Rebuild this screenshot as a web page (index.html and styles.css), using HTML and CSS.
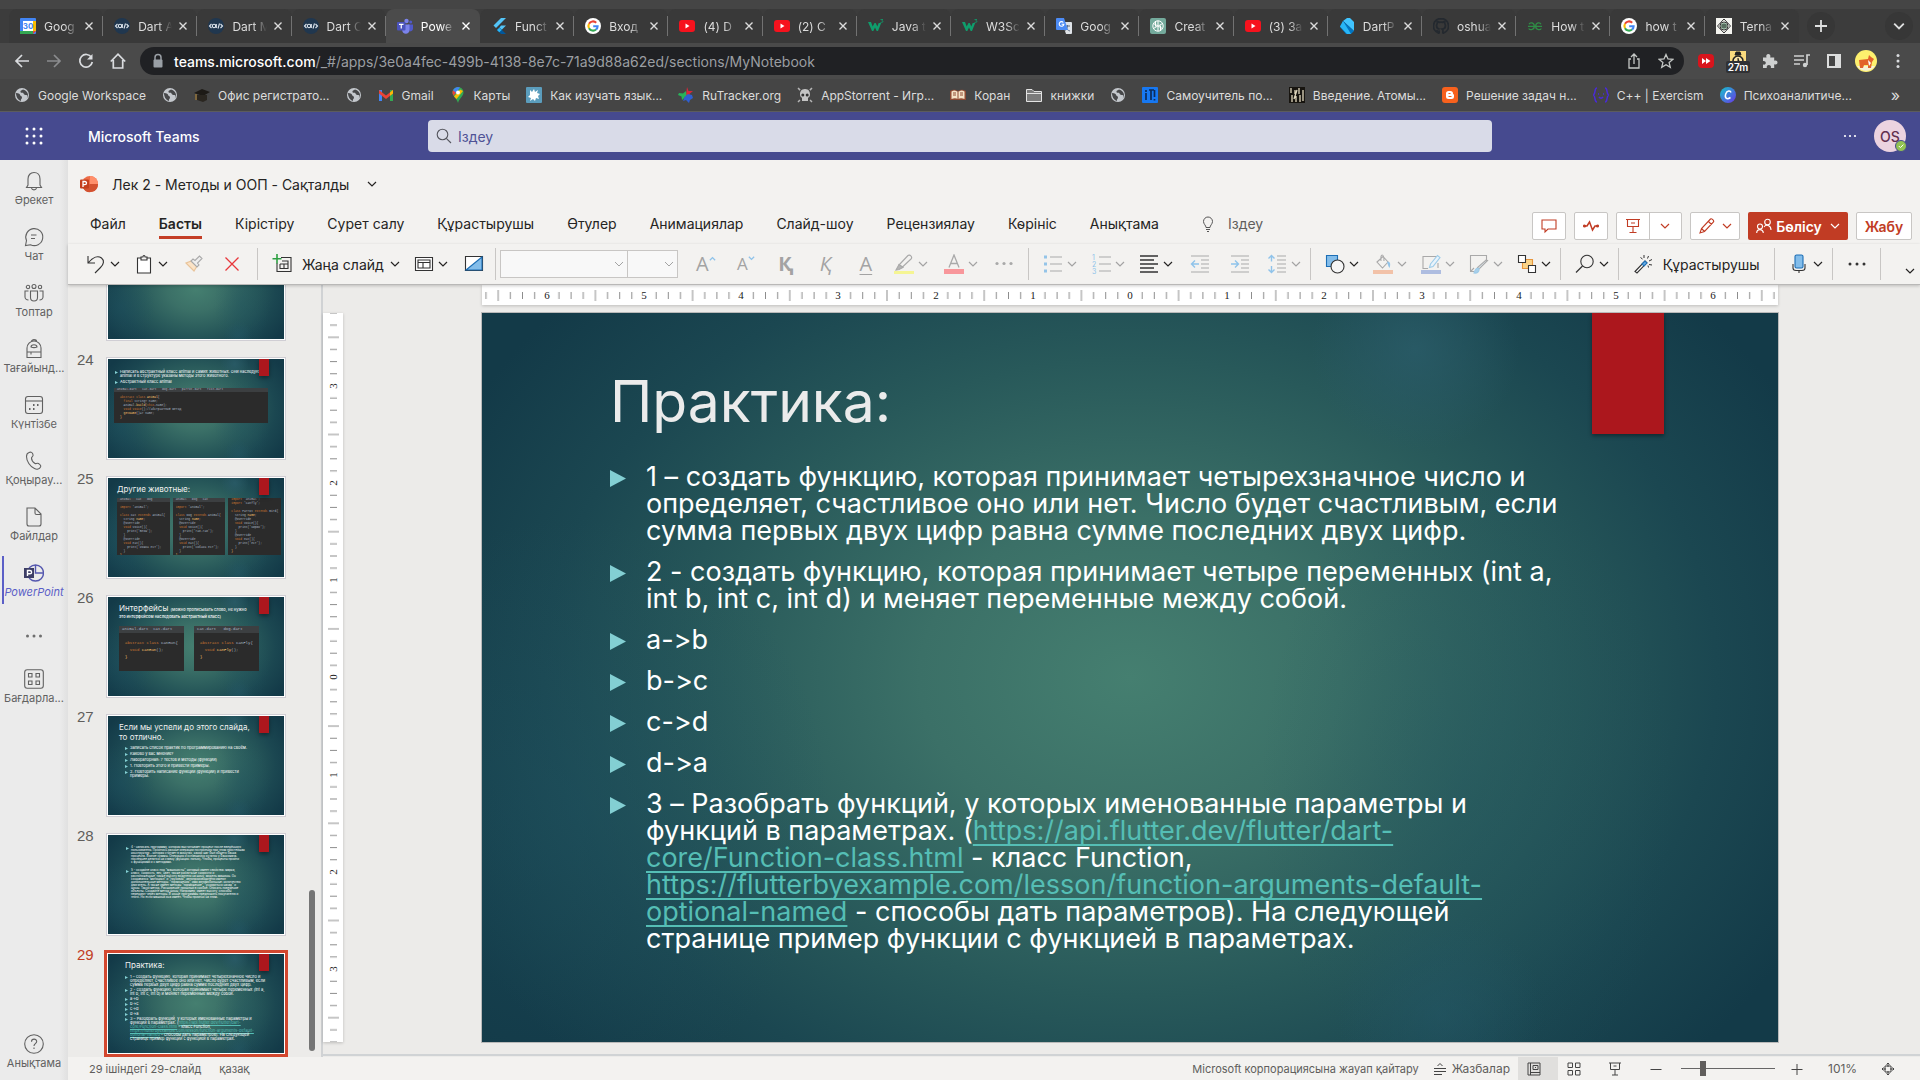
FILE: index.html
```html
<!DOCTYPE html>
<html lang="kk">
<head>
<meta charset="utf-8">
<title>PowerPoint | Microsoft Teams</title>
<link rel="stylesheet" href="styles.css">
</head>
<body>
<svg class="sprite" aria-hidden="true">
  <symbol id="chev" viewBox="0 0 10 10"><path d="M1 3l4 4 4-4" fill="none" stroke="currentColor" stroke-width="1.2"/></symbol>
  <symbol id="x" viewBox="0 0 10 10"><path d="M1.500 1.500l7 7M8.500 1.500l-7 7" stroke="currentColor" stroke-width="1.400"/></symbol>
  <symbol id="globe" viewBox="0 0 16 16"><circle cx="8" cy="8" r="7" fill="#c4c8cd"/><path d="M2 6c3 0 4 1 4 2s2 1 2 2.500S6.500 12 7 14c-3-1-5-4-5-8zM9 2.500c-1 1-3 1-2.500 2.500S9 5 9.500 6.500 11 8 12.500 8s1 3-.5 4c2-1.500 2.500-4 1.500-6S11 3 9 2.500z" fill="#47484a"/></symbol>
  <symbol id="codes" viewBox="0 0 16 16"><circle cx="8" cy="8" r="8" fill="#20374f"/><path d="M3.500 6L1.500 8l2 2M12.500 6l2 2-2 2M11.500 5.500l-1.500 5" fill="none" stroke="#dfe6ee" stroke-width="1.100"/><circle cx="6" cy="8" r="1.700" fill="none" stroke="#dfe6ee" stroke-width="1.100"/><path d="M8.300 6v4" stroke="#dfe6ee" stroke-width="1.100"/></symbol>
  <symbol id="yt" viewBox="0 0 16 16"><rect y="2" width="16" height="12" rx="3" fill="#f6121d"/><path d="M6.500 5.500v5l4-2.500z" fill="#fff"/></symbol>
  <symbol id="w3" viewBox="0 0 16 16"><path d="M0 4h3l1.700 4.500L6.500 5h1.200l1.600 3.500L10.700 5h2.500L10 13H8.700L7 9.500 5.300 13H4z" fill="#0f9d6c"/><path d="M12.500 1.500h2.500l-1.300 1.300c2 0 1.500 2.200-1.200 1.700" fill="none" stroke="#0f9d6c" stroke-width=".8"/></symbol>
  <symbol id="google" viewBox="0 0 16 16"><circle cx="8" cy="8" r="8" fill="#fff"/><g fill="none" stroke-width="2.100"><path d="M11.200 4.700A4.600 4.600 0 0 0 4 5.800" stroke="#ea4335"/><path d="M4 5.800a4.600 4.600 0 0 0 0 4.400" stroke="#fbbc05"/><path d="M4 10.200a4.600 4.600 0 0 0 7 1.300" stroke="#34a853"/><path d="M11 11.500c1-.8 1.600-2 1.600-3.300H8.200" stroke="#4285f4"/></g></symbol>
</svg>

<header class="browser">
  <nav class="tabstrip" aria-label="Tabs">
    <div class="tabs">
      <div class="tab"><svg viewBox="0 0 16 16"><rect width="16" height="16" rx="1" fill="#4285f4"/><path d="M13 3h3v10h-3z" fill="#fbbc04"/><path d="M0 13h13v3H0z" fill="#34a853"/><path d="M13 13h3l-3 3z" fill="#ea4335"/><path d="M3 3h10v10H3z" fill="#fff"/><text x="8" y="11" text-anchor="middle" font-size="8" fill="#4285f4" font-weight="700">30</text></svg><span>Goog</span><button aria-label="Close"><svg><use href="#x"/></svg></button></div>
      <div class="tab"><svg><use href="#codes"/></svg><span>Dart A</span><button aria-label="Close"><svg><use href="#x"/></svg></button></div>
      <div class="tab"><svg><use href="#codes"/></svg><span>Dart M</span><button aria-label="Close"><svg><use href="#x"/></svg></button></div>
      <div class="tab"><svg><use href="#codes"/></svg><span>Dart C</span><button aria-label="Close"><svg><use href="#x"/></svg></button></div>
      <div class="tab active"><svg viewBox="0 0 16 16"><circle cx="9.500" cy="3" r="2.200" fill="#7b83eb"/><circle cx="13.700" cy="4" r="1.500" fill="#5059c9"/><path d="M11 6.500h5v4c0 2-1.500 3-3.500 3z" fill="#5059c9"/><path d="M5 6.500h7.500v5c0 6-7.500 5.500-7.500 0z" fill="#7b83eb"/><rect y="4" width="8.500" height="8.500" rx="1" fill="#4b53bc"/><path d="M2 6.300h4.500M4.250 6.300v4.200" stroke="#fff" stroke-width="1.200"/></svg><span>Powe</span><button aria-label="Close"><svg><use href="#x"/></svg></button></div>
      <div class="tab"><svg viewBox="0 0 16 16"><path d="M10 0h5L5 10 2.500 7.500z" fill="#54c5f8"/><path d="M10 7.500h5L10.500 12l-2.200-2.200z" fill="#54c5f8"/><path d="M6 12l2.500-2.500L15 16h-5z" fill="#01579b"/><path d="M6 12l2.300-2.300 2.300 2.300L8.300 14.300z" fill="#29b6f6"/></svg><span>Funct</span><button aria-label="Close"><svg><use href="#x"/></svg></button></div>
      <div class="tab"><svg><use href="#google"/></svg><span>Вход</span><button aria-label="Close"><svg><use href="#x"/></svg></button></div>
      <div class="tab"><svg><use href="#yt"/></svg><span>(4) D</span><button aria-label="Close"><svg><use href="#x"/></svg></button></div>
      <div class="tab"><svg><use href="#yt"/></svg><span>(2) C</span><button aria-label="Close"><svg><use href="#x"/></svg></button></div>
      <div class="tab"><svg><use href="#w3"/></svg><span>Java t</span><button aria-label="Close"><svg><use href="#x"/></svg></button></div>
      <div class="tab"><svg><use href="#w3"/></svg><span>W3Sc</span><button aria-label="Close"><svg><use href="#x"/></svg></button></div>
      <div class="tab"><svg viewBox="0 0 16 16"><path d="M6 4h9a1 1 0 0 1 1 1v10a1 1 0 0 1-1 1h-5z" fill="#dfe3e8"/><path d="M9 8h5M11.500 7v1c0 2-1 3.500-2.500 4.500M10 9.500c1 2 2 3 4 3.500" stroke="#5f6f86" fill="none"/><path d="M1 0h7l4 12H1a1 1 0 0 1-1-1V1a1 1 0 0 1 1-1z" fill="#4c8bf5"/><path d="M7.300 4.500A2.300 2.300 0 1 0 7.800 6.300H5.600" fill="none" stroke="#fff" stroke-width="1.100"/></svg><span>Goog</span><button aria-label="Close"><svg><use href="#x"/></svg></button></div>
      <div class="tab"><svg viewBox="0 0 16 16"><rect width="16" height="16" rx="2" fill="#74aa9c"/><g fill="none" stroke="#fff"><circle cx="8" cy="8" r="5.200"/><path d="M8 2.800v5L3.500 10.500M8 13.200v-5l4.500-2.700M3.500 5.500L8 8l4.500 2.600M5.500 3.500v5M10.500 12.500v-5"/></g></svg><span>Creat</span><button aria-label="Close"><svg><use href="#x"/></svg></button></div>
      <div class="tab"><svg><use href="#yt"/></svg><span>(3) За</span><button aria-label="Close"><svg><use href="#x"/></svg></button></div>
      <div class="tab"><svg viewBox="0 0 16 16"><path d="M4 3l4-3h3l4 4v9L4 3z" fill="#40c4ff"/><path d="M4 3l11 10-3 3H7L1 9z" fill="#0175c2"/><path d="M4 3L1 8.500 8 16h4z" fill="#29b6f6"/></svg><span>DartP</span><button aria-label="Close"><svg><use href="#x"/></svg></button></div>
      <div class="tab"><svg viewBox="0 0 16 16"><path d="M8 .5a7.500 7.500 0 0 0-2.400 14.600c.4.100.5-.2.500-.4v-1.400c-2 .4-2.500-.9-2.600-1.200M8 .5a7.500 7.500 0 0 1 2.400 14.600c-.4.100-.5-.2-.5-.4v-2c0-.8-.2-1.300-.5-1.500 2.500-.3 3.200-1.700 3-4-.1-.7-.3-1.200-.7-1.700V3.500c-.7 0-1.400.4-2 .8-1-.3-2.400-.3-3.400 0-.6-.4-1.300-.8-2-.8v2c-.4.500-.6 1-.7 1.700-.2 2.300.5 3.700 3 4" fill="none" stroke="#24292f" stroke-width="1.800"/></svg><span>oshua</span><button aria-label="Close"><svg><use href="#x"/></svg></button></div>
      <div class="tab"><svg viewBox="0 0 16 16"><g fill="none" stroke="#2f8d46" stroke-width="1.300"><path d="M2 6.200c1-2 5-2 5.300 1.800C7.500 12 3 12.500 1.700 10.500M14 6.200c-1-2-5-2-5.300 1.800C8.500 12 13 12.500 14.300 10.500M1 8.300h14"/></g></svg><span>How t</span><button aria-label="Close"><svg><use href="#x"/></svg></button></div>
      <div class="tab"><svg><use href="#google"/></svg><span>how t</span><button aria-label="Close"><svg><use href="#x"/></svg></button></div>
      <div class="tab"><svg viewBox="0 0 16 16"><rect width="16" height="16" fill="#f4f4f0"/><g fill="none" stroke="#333"><path d="M8 1l6.500 7L8 15 1.500 8z"/><circle cx="8" cy="8" r="4"/></g><circle cx="8" cy="8" r="3" fill="#7fa78b"/><path d="M5.500 7h5M5.500 9h5" stroke="#333"/></svg><span>Terna</span><button aria-label="Close"><svg><use href="#x"/></svg></button></div>
    </div>
    <button class="round" aria-label="New tab"><svg viewBox="0 0 14 14"><path d="M7 1v12M1 7h12" stroke="#dfe0e0" stroke-width="1.800"/></svg></button>
    <button class="round last" aria-label="Search tabs"><svg viewBox="0 0 10 10"><path d="M1 3l4 4 4-4" fill="none" stroke="#dfe0e0" stroke-width="1.500"/></svg></button>
  </nav>
  <div class="navbar">
    <button aria-label="Back"><svg viewBox="0 0 16 16"><path d="M15 8H2M8 2L2 8l6 6" fill="none" stroke="#dadcdf" stroke-width="1.700"/></svg></button>
    <button aria-label="Forward"><svg viewBox="0 0 16 16"><path d="M1 8h13M8 2l6 6-6 6" fill="none" stroke="#8b8c8e" stroke-width="1.700"/></svg></button>
    <button aria-label="Reload"><svg viewBox="0 0 16 16"><path d="M13.500 4.500A6.300 6.300 0 1 0 14.300 9" fill="none" stroke="#dadcdf" stroke-width="1.700"/><path d="M14.500 1v5.500H9z" fill="#dadcdf"/></svg></button>
    <button aria-label="Home"><svg viewBox="0 0 16 16"><path d="M.8 8.500L8 1.200l7.200 7.300M3.300 7v8h9.400V7" fill="none" stroke="#dadcdf" stroke-width="1.700"/></svg></button>
    <div class="omnibox">
      <svg viewBox="0 0 16 16"><path d="M5 7V4.500a3 3 0 0 1 6 0V7" fill="none" stroke="#9aa0a6" stroke-width="1.500"/><rect x="3.500" y="6.500" width="9" height="8" rx="1" fill="#9aa0a6"/></svg>
      <p class="url"><b>teams.microsoft.com</b>/_#/apps/3e0a4fec-499b-4138-8e7c-71a9d88a62ed/sections/MyNotebook</p>
      <svg viewBox="0 0 16 16"><path d="M5 6H3v9h10V6h-2M8 11V1.500M5 4l3-3 3 3" fill="none" stroke="#c4c7c5" stroke-width="1.300"/></svg>
      <svg viewBox="0 0 16 16"><path d="M8 1.500l2 4.500 4.800.4-3.700 3.200 1.200 4.800L8 11.800l-4.300 2.600 1.200-4.800L1.200 6.400 6 6z" fill="none" stroke="#c4c7c5" stroke-width="1.300"/></svg>
    </div>
    <div class="exts">
      <svg viewBox="0 0 16 16"><rect y="1" width="16" height="14" rx="4" fill="#d8141c"/><path d="M4 5l4 3-4 3zM8 5l4.500 3L8 11z" fill="#fff"/></svg>
      <div class="timer"><svg viewBox="0 0 16 16"><path fill="#fadb7e" d="M0 0h16v16H0z"/><circle cx="8" cy="10" r="5" fill="#f8e2a6" stroke="#222" stroke-width="1.600"/><path d="M6 1h4l1 3H5zM8 7v3l2 1" stroke="#222" fill="#222"/></svg><span>27m</span></div>
      <svg viewBox="0 0 16 16"><path d="M1 4.500h3.500c-.8-2 .3-3.500 1.800-3.500S9 2.500 8.200 4.500h4v3.300c2-.8 3.300.2 3.300 1.700s-1.300 2.500-3.300 1.700V15H8.800c.8-2-.7-3-2-3s-2.500 1-2 3H1v-3.500c2 .6 2.800-.6 2.800-1.700S2.500 7.500 1 8z" fill="#cfd1d1"/></svg>
      <svg viewBox="0 0 16 16"><path d="M0 3h10M0 7h10M0 11h6M13 12V2h3" fill="none" stroke="#cfd1d1" stroke-width="1.700"/><circle cx="11" cy="12" r="2.200" fill="#cfd1d1"/></svg>
      <svg viewBox="0 0 16 16"><path d="M1 1h14v14H1z" fill="#dcdddd"/><path d="M3 3h6v10H3z" fill="#454545"/></svg>
      <svg class="face" viewBox="0 0 22 22"><circle cx="11" cy="11" r="11" fill="#fdf06e"/><path d="M2 16h18a11 11 0 0 1-18 0z" fill="#f7f3d8"/><path d="M4 10l9-1 1-4 2 2 3 2-2 3-1 6h-3v-3H9l-1 3H5z" fill="#e2632b"/><path d="M13 10l3 3-2 3z" fill="#fff"/></svg>
      <svg viewBox="0 0 16 16"><g fill="#dadcdf"><circle cx="8" cy="2.500" r="1.500"/><circle cx="8" cy="8" r="1.500"/><circle cx="8" cy="13.500" r="1.500"/></g></svg>
    </div>
  </div>
  <nav class="bookmarks" aria-label="Bookmarks">
    <a href="#"><svg><use href="#globe"/></svg>Google Workspace</a>
    <a href="#" aria-label="Site"><svg><use href="#globe"/></svg></a>
    <a href="#"><svg viewBox="0 0 16 16"><path d="M0 6l8-4 8 3-7 4z" fill="#1d1a16"/><path d="M3 8v5l6 2 4-2V8" fill="#2a2620"/><path d="M2 7v6" stroke="#b98a36"/></svg>Офис регистрато...</a>
    <a href="#" aria-label="Site"><svg><use href="#globe"/></svg></a>
    <a href="#"><svg viewBox="0 0 16 16"><path d="M1 3h3v11H1z" fill="#4285f4"/><path d="M12 3h3v11h-3z" fill="#34a853"/><path d="M1 3l7 5.500L15 3v3.500L8 12 1 6.500z" fill="#ea4335"/><path d="M12 5.500L15 3v3.500l-3 2.300z" fill="#fbbc04"/></svg>Gmail</a>
    <a href="#"><svg viewBox="0 0 16 16"><path d="M8 0a5.500 5.500 0 0 1 5.500 5.500C13.500 9 9.500 11 8 16 6.500 11 2.500 9 2.500 5.500A5.500 5.500 0 0 1 8 0z" fill="#34a853"/><path d="M3 3.300A5.500 5.500 0 0 1 10 .4L5 7z" fill="#4285f4"/><path d="M3 3.300l3 2.500-2.500 3C2 6.500 2.300 4.500 3 3.300z" fill="#ea4335"/><path d="M4 9.500l6-7 3 1.500-6.500 8z" fill="#fbbc04"/><circle cx="8" cy="5.500" r="2" fill="#fff"/></svg>Карты</a>
    <a href="#"><svg viewBox="0 0 16 16"><rect width="16" height="16" rx="1" fill="#5b9dbd"/><path d="M4 3l2 2 2-3 1 3 3-2-1 3 3 1-2 2 1 3-3-1-1 3-2-2-3 2 1-3-3-1 2-2z" fill="#fff"/></svg>Как изучать язык...</a>
    <a href="#"><svg viewBox="0 0 16 16"><path d="M9 0l1.500 4H15l-3.500 3L13 11 8 8z" fill="#d9263b"/><path d="M1 6l4 .5L8 4l.5 5L4 13l-.5-3.500L0 8z" fill="#27b35a"/><path d="M10 7l4 1 1 3-3 2-1 3-3-3-3 1 1.500-4z" fill="#2f5fd0"/></svg>RuTracker.org</a>
    <a href="#"><svg viewBox="0 0 16 16"><path d="M1 1l14 14M15 1L1 15" stroke="#b5b5b5" stroke-width="1.500" stroke-dasharray="3 14"/><path d="M8 2c4 0 5 3 5 5.500 0 2-1 2.500-2 3.500v3H5v-3c-1-1-2-1.500-2-3.500C3 5 4 2 8 2z" fill="#c4c4c4"/><circle cx="5.800" cy="8" r="1.500" fill="#333"/><circle cx="10.200" cy="8" r="1.500" fill="#333"/></svg>AppStorrent - Игр...</a>
    <a href="#"><svg viewBox="0 0 16 16"><path d="M0 13V4c3-2 6-1 8 0 2-1 5-2 8 0v9z" fill="#8d4a33"/><path d="M1.500 12V4.500C4 3 6 3.500 8 5c2-1.500 4-2 6.500-.5V12C12 11 10 11 8 12c-2-1-4-1-6.500 0z" fill="#f5e3c7"/><path d="M8 5v7M3 6h3M3 8h3M10 6h3M10 8h3" stroke="#8d4a33"/></svg>Коран</a>
    <a href="#"><svg viewBox="0 0 16 16"><path d="M.5 14.500v-12H6l2 2h7.500v10z" fill="#7b7b7b" stroke="#e3e3e3"/><path d="M.5 6.500h15" stroke="#e3e3e3"/></svg>книжки</a>
    <a href="#" aria-label="Site"><svg><use href="#globe"/></svg></a>
    <a href="#"><svg viewBox="0 0 16 16"><rect width="16" height="16" rx="1" fill="#1778f2"/><path d="M4 3v2M4 6v7M7 3h5M9 3v10M12.500 3v7M12.500 12v1.500" stroke="#0b2c5c" stroke-width="1.700"/></svg>Самоучитель по...</a>
    <a href="#"><svg viewBox="0 0 16 16"><rect width="16" height="16" fill="#17140f"/><path d="M2 1v5M3 8v7M6 3v4M7 9v6M10 1v6M11 8v7M14 3v11M5 12l3-9" stroke="#e0d7bd" stroke-width="1.300"/></svg>Введение. Атомы...</a>
    <a href="#"><svg viewBox="0 0 16 16"><rect width="16" height="16" rx="3" fill="#f7611d"/><path d="M4 6.500A2.500 2.500 0 0 1 6.500 4h2A2.500 2.500 0 0 1 11 6.500c0 .8.500 1 1 1v2A2.500 2.500 0 0 1 9.500 12h-3A2.500 2.500 0 0 1 4 9.500z" fill="#fff"/><path d="M6.500 6.500h2M6.500 9.500h3" stroke="#f7611d"/></svg>Решение задач н...</a>
    <a href="#"><svg viewBox="0 0 16 16"><g fill="none" stroke="#4a2bd6" stroke-width="1.500"><path d="M4 1c-3 0-1 5-3.500 7C3 10 1 15 4 15M12 1c3 0 1 5 3.500 7-2.500 2-.5 7-3.500 7"/><path d="M6 10c1 1.500 3 1.500 4 0M5 7h1M10 7h1"/></g></svg>C++ | Exercism</a>
    <a href="#"><svg viewBox="0 0 16 16"><defs><linearGradient id="cv" x2="1" y2="1"><stop stop-color="#14c5cc"/><stop offset="1" stop-color="#6b35e8"/></linearGradient></defs><circle cx="8" cy="8" r="8" fill="url(#cv)"/><path d="M11 5.500C10.500 3.500 7 3 5.700 7s1 6 4.800 3.500" fill="none" stroke="#fff" stroke-width="1.500"/></svg>Психоаналитиче...</a>
    <a href="#" class="more">»</a>
  </nav>
</header>

<header class="teams">
  <button class="waffle" aria-label="Apps"><svg viewBox="0 0 18 18"><g fill="#fff"><circle cx="2" cy="2" r="1.500"/><circle cx="9" cy="2" r="1.500"/><circle cx="16" cy="2" r="1.500"/><circle cx="2" cy="9" r="1.500"/><circle cx="9" cy="9" r="1.500"/><circle cx="16" cy="9" r="1.500"/><circle cx="2" cy="16" r="1.500"/><circle cx="9" cy="16" r="1.500"/><circle cx="16" cy="16" r="1.500"/></g></svg></button>
  <h1>Microsoft Teams</h1>
  <label class="search"><svg viewBox="0 0 16 16"><circle cx="6.500" cy="6.500" r="5.300" fill="none" stroke="#55565e" stroke-width="1.100"/><path d="M10.300 10.300L15 15" stroke="#55565e" stroke-width="1.100"/></svg><input type="text" placeholder="Іздеу" aria-label="Іздеу"></label>
  <button class="tdots" aria-label="More"><svg viewBox="0 0 14 4"><g fill="#fff"><circle cx="2" cy="2" r="1.100"/><circle cx="7" cy="2" r="1.100"/><circle cx="12" cy="2" r="1.100"/></g></svg></button>
  <button class="avatar">OS<svg viewBox="0 0 12 12"><circle cx="6" cy="6" r="5.500" fill="#92c353" stroke="#464a8f"/><path d="M3.800 6l1.600 1.600 3-3" fill="none" stroke="#fff"/></svg></button>
</header>

<div class="shell">
  <nav class="rail" aria-label="Teams">
    <a href="#"><svg viewBox="0 0 20 20"><path d="M4 14V8c0-4 2.500-6.500 6-6.500S16 4 16 8v6l1.500 2.500h-15zM7.500 17c.5 2.500 4.500 2.500 5 0"/></svg>Әрекет</a>
    <a href="#"><svg viewBox="0 0 20 20"><path d="M1.500 18.500l1-5A8.500 8.500 0 1 1 6.500 17.700zM7 8h5.500M7 11.500h4"/></svg>Чат</a>
    <a href="#"><svg viewBox="0 0 20 20"><circle cx="10" cy="3.500" r="2"/><circle cx="4" cy="4" r="1.700"/><circle cx="16" cy="4" r="1.700"/><path d="M6.500 8h7v6.500a3.500 3.500 0 0 1-7 0zM4.500 8H1v6c0 1.500 1.500 3 3.500 3M15.500 8H19v6c0 1.500-1.500 3-3.500 3"/></svg>Топтар</a>
    <a href="#"><svg viewBox="0 0 20 20"><path d="M3 18.500V9a7 7 0 0 1 14 0v9.500zM7.500 2.500C7.500 0 12.500 0 12.500 2.500M3 13h14M7 13v2.500M7 8c0-3 6-3 6 0-2 .8-4 .8-6 0z"/></svg>Тағайынд...</a>
    <a href="#"><svg viewBox="0 0 20 20"><rect x="1.500" y="1.500" width="17" height="17" rx="2.500"/><path d="M1.500 6h17"/><path d="M9 10h1.500M13 10h1.500M5 14h1.500M9 14h1.500" stroke-width="2"/></svg>Күнтізбе</a>
    <a href="#"><svg viewBox="0 0 20 20"><path d="M5 1.500c2-1 3.500 0 4 2 .7 2-1.500 2.500-1.500 3.500 0 2 2 4.500 3.500 5.500 1 .5 2-1 3.500 0s3 2 2 3.500c-1 2-3.500 3-6 1.500C6 15.500 2.500 10 2.500 5.500c0-2 1-3.500 2.500-4z"/></svg>Қоңырау...</a>
    <a href="#"><svg viewBox="0 0 20 20"><path d="M3 1h8l6 6v10c0 1-1 2-2 2H5c-1 0-2-1-2-2zM11 1v5c0 1 .5 1.500 1.500 1.500H17"/></svg>Файлдар</a>
    <a href="#" class="current"><svg viewBox="0 0 20 20"><circle cx="11.500" cy="10" r="8" stroke="#5558af" stroke-width="1.400"/><path d="M11.500 2v8h8" stroke="#5558af" stroke-width="1.400"/><rect x="0" y="5" width="10" height="10" fill="#3d3e66" stroke="none"/><path d="M3.500 13V7.500h2.300c2.400 0 2.400 3.300 0 3.300H3.500" stroke="#fff" stroke-width="1.400"/></svg>PowerPoint</a>
    <a href="#" class="dots" aria-label="More"><svg viewBox="0 0 20 20"><g fill="#6e6e6e" stroke="none"><circle cx="3.500" cy="10" r="1.500"/><circle cx="10" cy="10" r="1.500"/><circle cx="16.500" cy="10" r="1.500"/></g></svg></a>
    <a href="#"><svg viewBox="0 0 20 20"><rect x=".7" y=".7" width="18.600" height="18.600" rx="2.500"/><path d="M4.500 4.500h3.500v3.500H4.500zM12 4.500h3.500v3.500H12zM4.500 12h3.500v3.500H4.500zM12 12h3.500v3.500H12z"/></svg>Бағдарла...</a>
    <a href="#" class="help"><svg viewBox="0 0 20 20"><circle cx="10" cy="10" r="9.300"/><path d="M7.500 7.800c0-3.500 5.200-3.500 5.200-.3 0 2.200-2.700 2.200-2.700 4.500M10 13.500V15"/></svg>Анықтама</a>
  </nav>

  <div class="app">
    <div class="titlebar">
      <svg class="ppt" viewBox="0 0 18 18"><circle cx="10" cy="9" r="8" fill="#ed6c47"/><path d="M10 1a8 8 0 0 1 8 8h-8z" fill="#ff8f6b"/><path d="M3 13a8 8 0 0 0 15-4h-8z" fill="#d35230"/><rect y="4.500" width="9" height="9" rx="1" fill="#c43e1c"/><path d="M3 12V6.500h1.800c2.300 0 2.300 3.200 0 3.200H3" fill="none" stroke="#fff" stroke-width="1.300"/></svg>
      <p>Лек 2 - Методы и ООП - Сақталды</p>
      <button aria-label="Menu"><svg class="ch"><use href="#chev"/></svg></button>
    </div>
    <div class="menubar">
      <button>Файл</button><button class="on">Басты</button><button>Кірістіру</button><button>Сурет салу</button><button>Құрастырушы</button><button>Өтулер</button><button>Анимациялар</button><button>Слайд-шоу</button><button>Рецензиялау</button><button>Көрініс</button><button>Анықтама</button>
      <button class="tell"><svg viewBox="0 0 16 16"><path d="M6 11.500C6 9.500 3.500 8 3.500 5.500a4.500 4.500 0 0 1 9 0C12.500 8 10 9.500 10 11.500zM6 13.500h4M7 15.500h2" fill="none" stroke="#555"/></svg>Іздеу</button>
      <div class="actions">
        <button class="box" aria-label="Comments"><svg viewBox="0 0 16 16"><path d="M1 2h14v9H7l-3 3v-3H1z"/></svg></button>
        <button class="box" aria-label="Activity"><svg viewBox="0 0 16 16"><path d="M1 8h3l2.500-4 3 8L12 8h3" stroke-width="1.500"/><circle cx="1.500" cy="8" r="1" fill="#c13c24"/><circle cx="14.500" cy="8" r="1" fill="#c13c24"/></svg></button>
        <div class="pair"><button aria-label="Present"><svg viewBox="0 0 16 16"><path d="M1 1.500h14M2.500 1.500v7h11v-7M8 8.500V14M4.500 14.500h7M6 5h4"/></svg></button><button aria-label="Present options"><svg class="ch"><use href="#chev"/></svg></button></div>
        <button class="box wide" aria-label="Editing"><svg viewBox="0 0 16 16"><path d="M1 15l1.500-4.500L11.500 1c1-1 4 1.500 3 3L5.500 13.500zM2.500 10.500l3 3M9.500 3.500l3 3"/></svg><svg class="ch"><use href="#chev"/></svg></button>
        <button class="share"><svg viewBox="0 0 16 16"><circle cx="4" cy="8.500" r="2.500"/><circle cx="11.500" cy="4" r="2.800"/><path d="M.7 15c0-4.500 6.600-4.500 6.600 0M8 9c2-3 7-2 7 3"/></svg>Бөлісу<svg class="ch"><use href="#chev"/></svg></button>
        <button class="box close">Жабу</button>
      </div>
    </div>
    <div class="ribbon">
      <div class="grp first">
        <button class="sp" aria-label="Undo"><svg viewBox="0 0 20 20"><path d="M2 2v7h7M2.500 8.500C7 3 12 1.500 15.500 4c3 2.500 2.500 6-1 9.500L9 19" fill="none"/></svg><svg class="ch"><use href="#chev"/></svg></button>
        <button class="sp" aria-label="Paste"><svg viewBox="0 0 20 20"><path d="M7 4H3.500v15h13V4H13M7 6V3h2c0-2 2-2 2 0h2v3z" fill="#fff"/></svg><svg class="ch"><use href="#chev"/></svg></button>
        <button aria-label="Format painter"><svg class="dim" viewBox="0 0 20 20"><path d="M2 9l8 8 3-5-5.500-5z" fill="#fbe3c6" stroke="#e9c49a"/><path d="M7 7l6 6 2-2-1.500-2L18 4.500 15.500 2 11 6.500 9 5z" fill="#eee"/></svg></button>
        <button aria-label="Delete"><svg viewBox="0 0 20 20"><path d="M3.500 3.500l13 13M16.500 3.500l-13 13" stroke="#e8373b" stroke-width="1.300"/></svg></button>
      </div>
      <div class="grp">
        <button class="new"><svg viewBox="0 0 20 20"><path d="M5 9v8.500h14v-14H9M8 10v4.500h8V7h-6M8 10h8M12 10v4.500" fill="none"/><path d="M5 0v9.500M.5 4.800h9" stroke="#2ea043" stroke-width="1.600"/></svg><span>Жаңа слайд</span><svg class="ch"><use href="#chev"/></svg></button>
        <button class="sp" aria-label="Layout"><svg viewBox="0 0 20 20"><path d="M1.500 3.500h17v13h-17z" fill="#fff"/><path d="M4 6h12v2.500H4zM4 8.500V14h12V8.500M9 8.500V14" fill="none"/></svg><svg class="ch"><use href="#chev"/></svg></button>
        <button aria-label="Background"><svg viewBox="0 0 20 20"><path d="M1.500 2.500h17v14h-17z" fill="#fff"/><path d="M18 3v13H2z" fill="#83bdea" stroke="#1c6eb5"/></svg></button>
      </div>
      <div class="grp font">
        <div class="combos"><select aria-label="Font"><option></option></select><select class="size" aria-label="Size"><option></option></select></div>
        <button class="let" aria-label="Grow">A<sup><svg viewBox="0 0 8 8"><path d="M1 6l3-3 3 3"/></svg></sup></button>
        <button class="let sm" aria-label="Shrink">A<sup><svg viewBox="0 0 8 8"><path d="M1 2l3 3 3-3"/></svg></sup></button>
        <button class="let b">Қ</button>
        <button class="let i">Қ</button>
        <button class="let u">A</button>
        <button class="sp dim" aria-label="Highlight"><svg viewBox="0 0 20 20"><path d="M5 11L14 1.500c1.500-1.500 5 1.500 3 3.500L8.500 13z" fill="none"/><path d="M5 10.500l4 3-4 2-3 .5z" fill="#b5b5b5"/><path d="M0 17h20v3H0z" fill="#f5f593" stroke="none"/></svg><svg class="ch"><use href="#chev"/></svg></button>
        <button class="sp dim" aria-label="Font color"><svg viewBox="0 0 20 20"><path d="M5 13.500L10 1l5 12.500M6.500 9.500h7" fill="none" stroke-width="1.300"/><path d="M0 15h20v5H0z" fill="#f8979b" stroke="none"/></svg><svg class="ch"><use href="#chev"/></svg></button>
        <button class="nar dim" aria-label="More"><svg viewBox="0 0 20 20"><g fill="#a9a9a9" stroke="none"><circle cx="3" cy="9.500" r="1.600"/><circle cx="10" cy="9.500" r="1.600"/><circle cx="17" cy="9.500" r="1.600"/></g></svg></button>
      </div>
      <div class="grp">
        <button class="sp dim" aria-label="Bullets"><svg viewBox="0 0 20 20"><path d="M7 3h12M7 10h12M7 17h12"/><path d="M1 1.500h3v3H1zM1 8.500h3v3H1zM1 15.500h3v3H1z" fill="#94c4e8" stroke="none"/></svg><svg class="ch"><use href="#chev"/></svg></button>
        <button class="sp dim" aria-label="Numbering"><svg viewBox="0 0 20 20"><path d="M8 3h12M8 10h12M8 17h12"/><g fill="#8fc3ea" stroke="none" font-size="7"><text x="1" y="6">1</text><text x="1" y="13">2</text><text x="1" y="20">3</text></g></svg><svg class="ch"><use href="#chev"/></svg></button>
        <button class="sp" aria-label="Align"><svg viewBox="0 0 20 20"><path d="M1 2h18M1 6h14M1 10h18M1 14h14M1 18h18" stroke-width="1.300"/></svg><svg class="ch"><use href="#chev"/></svg></button>
        <button class="mid dim" aria-label="Outdent"><svg viewBox="0 0 20 20"><path d="M1 2h18M11 6h8M11 10h8M11 14h8M1 18h18"/><path d="M9 10H1.500M5 6.500L1.500 10 5 13.500" stroke="#8fc3ea" fill="none" stroke-width="1.400"/></svg></button>
        <button class="mid dim" aria-label="Indent"><svg viewBox="0 0 20 20"><path d="M1 2h18M11 6h8M11 10h8M11 14h8M1 18h18"/><path d="M1 10h7.500M5 6.500L8.500 10 5 13.500" stroke="#8fc3ea" fill="none" stroke-width="1.400"/></svg></button>
        <button class="sp dim" aria-label="Line spacing"><svg viewBox="0 0 20 20"><path d="M10 2h9M10 6h9M10 10h9M10 14h9M10 18h9"/><path d="M4.500 1.500v6M1.500 4.500l3-3 3 3M4.500 12v6.500M1.500 15.500l3 3 3-3" stroke="#8fc3ea" fill="none" stroke-width="1.400"/></svg><svg class="ch"><use href="#chev"/></svg></button>
      </div>
      <div class="grp">
        <button class="sp" aria-label="Shapes"><svg viewBox="0 0 20 20"><path d="M1.500 1.500h11v11h-11z" fill="#83bdea" stroke="#1c6eb5"/><circle cx="12.500" cy="12.500" r="6.500" fill="#f6f6f6"/></svg><svg class="ch"><use href="#chev"/></svg></button>
        <button class="sp dim" aria-label="Fill"><svg viewBox="0 0 20 20"><path d="M4 8l6-5.500 5 5.500-5.500 6zM8 7c-1-8 3-8 3 0" fill="none"/><path d="M14 8c3-1 4 2 2.500 6-1-1-1.500-3-2.500-6z" fill="#94c4e8" stroke="none"/><path d="M0 16h20v4H0z" fill="#f2c2a8" stroke="none"/></svg><svg class="ch"><use href="#chev"/></svg></button>
        <button class="sp dim" aria-label="Outline"><svg viewBox="0 0 20 20"><path d="M16 2.500H2v12h5M17 9v5" fill="none"/><path d="M8.500 13.500l1-3.500 7-8.500 2.500 2-7 9z" fill="#e8f3fb" stroke="#9ccbe9"/><path d="M0 16h20v4H0z" fill="#aebde0" stroke="none"/></svg><svg class="ch"><use href="#chev"/></svg></button>
        <button class="sp dim" aria-label="Effects"><svg viewBox="0 0 20 20"><path d="M5 17.500H1.500v-16h16V6M1.500 17.500L5 14" fill="none"/><path d="M18.500 6.500L10 15l-1.500-1.500L17 6z" fill="#e8f3fb"/><path d="M10 14.500c-3-1-4 1.500-5 4.500 3 .5 5.500-1 5-4.500z" fill="#a9cfe9" stroke="#9ccbe9"/></svg><svg class="ch"><use href="#chev"/></svg></button>
        <button class="sp" aria-label="Arrange"><svg viewBox="0 0 20 20"><path d="M5.500 5.500h10v9h-10z" fill="#fbd488" stroke="#e8963c"/><path d="M1.500 1.500h7v7h-7zM11.500 11.500h7v7h-7z" fill="#fff"/></svg><svg class="ch"><use href="#chev"/></svg></button>
      </div>
      <div class="grp"><button class="sp" aria-label="Find"><svg viewBox="0 0 20 20"><circle cx="12" cy="7.500" r="6.200" fill="none"/><path d="M7.500 12L1 18.500" stroke-width="1.300"/></svg><svg class="ch"><use href="#chev"/></svg></button></div>
      <div class="grp des"><button class="new"><svg viewBox="0 0 20 20"><path d="M2 17.500L12 7l1.800 1.800L4 19z" fill="#fff"/><path d="M9 10l3-3 2 2-3 3z" fill="#6bb1e8" stroke="#1c6eb5"/><path d="M11 1v3M15.500 2l-1 2.500M19 5.500L16 7M19 11l-3-.5M7.500 3.500L9.500 5M15.500 13.500l-.5-2" stroke-width="1"/></svg><span>Құрастырушы</span></button></div>
      <div class="grp"><button class="sp" aria-label="Dictate"><svg viewBox="0 0 20 20"><rect x="6" y="1" width="8" height="13" rx="1.500" fill="#83bdea" stroke="#1c6eb5"/><path d="M4 10v4c0 2 2 2.500 3 2.500h6c1 0 3-.5 3-2.500v-4M10 16.500V19" fill="none"/></svg><svg class="ch"><use href="#chev"/></svg></button></div>
      <div class="grp md"><button class="nar" aria-label="More"><svg viewBox="0 0 20 20"><g fill="#333" stroke="none"><circle cx="3" cy="10" r="1.500"/><circle cx="10" cy="10" r="1.500"/><circle cx="17" cy="10" r="1.500"/></g></svg></button></div>
      <button class="fold" aria-label="Collapse"><svg class="ch"><use href="#chev"/></svg></button>
    </div>

    <main class="work">
      <aside class="thumbs">
        <ol>
          <li><span>23</span><div class="frame"><div class="mini"></div></div></li>
          <li><span>24</span><div class="frame"><div class="mini s24"><ul><li>Написать абстрактный класс animal и самих животных. Они наследуют<br>animal и в структуре указаны методы этого животного.</li><li>Абстрактный класс animal</li></ul><pre class="code c1"><i>animal.dart   cat.dart   dog.dart   parrot.dart   fish.dart</i>
<b>abstract class</b> <u>Animal</u>{
  <b>final</b> String? name;
  Animal.<u>build</u>(<b>this</b>.name);
  <b>void voice</b>();//абстрактный метод
  <u>getName</u>()=&gt; name;
<u>}</u></pre></div></div></li>
          <li><span>25</span><div class="frame"><div class="mini s25"><h4>Другие животные:</h4><div class="row"><pre class="code"><i>animal   cat   dog</i>
<b>import</b> 'animal';

<b>class</b> Cat <b>extends</b> Animal{
  String <u>name</u>;
  @override
  <b>void</b> voice(){
    print('meow');
  }
  @override
  <b>void</b> eat(){
    print('кошка ест');
  }
<u>}</u></pre><pre class="code"><i>animal   dog   cat</i>
<b>import</b> 'animal';

<b>class</b> Dog <b>extends</b> Animal{
  String <u>name</u>;
  @override
  <b>void</b> voice(){
    print('гав-гав');
  }
  @override
  <b>void</b> eat(){
    print('собака ест');
  }
<u>}</u></pre><pre class="code"><b>import</b> 'animal';
<b>import</b> 'canfly';

<b>class</b> Parrot <b>extends</b> Bird{
  String <u>name</u>;
  @override
  <b>void</b> voice(){
    print('чирик');
  }
  @override
  <b>void</b> eat(){
    print('ест');
  }
<u>}</u></pre></div></div></div></li>
          <li><span>26</span><div class="frame"><div class="mini s26"><h4>Интерфейсы <small>(можно прописывать слово, не нужно</small></h4><p>это интерфейсом наследовать абстрактный класс)</p><div class="row"><pre class="code big"><i>animal.dart  cat.dart</i>
<b>abstract class</b> CanRun{
  <b>void</b> <u>canRun</u>();
<u>}</u></pre><pre class="code big"><i>cat.dart   dog.dart</i>
<b>abstract class</b> CanFly{
  <b>void</b> <u>canFly</u>();
<u>}</u></pre></div></div></div></li>
          <li><span>27</span><div class="frame"><div class="mini s27"><h4>Если мы успели до этого слайда,<br>то отлично.</h4><ul><li>Записать список практик по программированию на своём.</li><li>Каково у вас мнение?</li><li>Лабораторная: 7 тестов и методы (функции)</li><li>1. Повторить этого и привести примеры.</li><li>2. Повторить написание функции (функции) и привести<br>примеры.</li></ul></div></div></li>
          <li><span>28</span><div class="frame"><div class="mini s28"><ul><li>4 - написать программу, которая высчитывает процент после введённого<br>пользователя. Пройтись разные операции построения при этом простейшая<br>конструктор - которая считает в минутах, какой шаг был общего банка<br>процента. Взятие суммы. Операция и оставшийся остаток у банкомата.<br>последнее делится на ставку (функция: пятью). Чтобы, проценты пройти<br>с функциями и с методами.</li><li>5 - создайте класс под “машинисты”, который имеет свойства: марка,<br>класс, скорость, вес, цвет, также различные скорости и<br>расположенные, также высоту водителя на шину, модель машины. Он<br>создавался “мотоцикл” и “грузовик”, автопроизводители имеют<br>дополнительные методы: “торможения”, имя автомобильные: количество<br>двигатель. А также имеет методы “торможение”, “ускориться назад” и<br>шины. Такой метод. Расширение прошлый в скобке. Описать поведение<br>объекты. Создайте метод шины, Например, имеет высоту, способы<br>передают через методы. В конце программы предложить покупателю и<br>этого. Но если машина она имеет. Чтобы приятно на этом.</li></ul></div></div></li>
          <li class="sel"><span>29</span><div class="frame"><div class="mini s29"><h4>Практика:</h4><ul><li>1 – создать функцию, которая принимает четырехзначное число и<br>определяет, счастливое оно или нет. Число будет счастливым, если<br>сумма первых двух цифр равна сумме последних двух цифр.</li><li>2 - создать функцию, которая принимает четыре переменных (int a,<br>int b, int c, int d) и меняет переменные между собой.</li><li>a-&gt;b</li><li>b-&gt;c</li><li>c-&gt;d</li><li>d-&gt;a</li><li>3 – Разобрать функций, у которых именованные параметры и<br>функций в параметрах. (<em>https://api.flutter.dev/flutter/dart-</em><br><em>core/Function-class.html</em> - класс Function,<br><em>https://flutterbyexample.com/lesson/function-arguments-default-</em><br><em>optional-named</em> - способы дать параметров). На следующей<br>странице пример функции с функцией в параметрах.</li></ul></div></div></li>
        </ol>
        <div class="scroll"><i></i></div>
      </aside>
      <section class="editor">
        <div class="hr"><svg viewBox="0 0 1296 20"><defs><pattern id="hp" x="648" width="97.200" height="20" patternUnits="userSpaceOnUse"><path d="M12.150 7v7M24.300 7v7M36.450 7v7M48.600 5v11M60.750 7v7M72.900 7v7M85.050 7v7" stroke="#8d8d8d"/></pattern></defs><rect width="1296" height="20" fill="url(#hp)"/><text x="65" y="14">6</text><text x="162" y="14">5</text><text x="259" y="14">4</text><text x="356" y="14">3</text><text x="454" y="14">2</text><text x="551" y="14">1</text><text x="648" y="14">0</text><text x="745" y="14">1</text><text x="842" y="14">2</text><text x="940" y="14">3</text><text x="1037" y="14">4</text><text x="1134" y="14">5</text><text x="1231" y="14">6</text></svg></div>
        <div class="canvas">
          <div class="vr"><svg viewBox="0 0 20 729"><defs><pattern id="vp" y="364.500" width="20" height="97.200" patternUnits="userSpaceOnUse"><path d="M7 12.150h7M7 24.300h7M7 36.450h7M5 48.600h11M7 60.750h7M7 72.900h7M7 85.050h7" stroke="#8d8d8d"/></pattern></defs><rect width="20" height="729" fill="url(#vp)"/><g><text transform="translate(14 73) rotate(-90)">3</text><text transform="translate(14 170) rotate(-90)">2</text><text transform="translate(14 267) rotate(-90)">1</text><text transform="translate(14 364) rotate(-90)">0</text><text transform="translate(14 462) rotate(-90)">1</text><text transform="translate(14 559) rotate(-90)">2</text><text transform="translate(14 656) rotate(-90)">3</text></g></svg></div>
          <article class="slide">
            <h2>Практика:</h2>
            <ul>
              <li>1 – создать функцию, которая принимает четырехзначное число и<br>определяет, счастливое оно или нет. Число будет счастливым, если<br>сумма первых двух цифр равна сумме последних двух цифр.</li>
              <li>2 - создать функцию, которая принимает четыре переменных (int a,<br>int b, int c, int d) и меняет переменные между собой.</li>
              <li>a-&gt;b</li>
              <li>b-&gt;c</li>
              <li>c-&gt;d</li>
              <li>d-&gt;a</li>
              <li>3 – Разобрать функций, у которых именованные параметры и<br>функций в параметрах. (<a href="#">https://api.flutter.dev/flutter/dart-<br>core/Function-class.html</a> - класс Function,<br><a href="#">https://flutterbyexample.com/lesson/function-arguments-default-<br>optional-named</a> - способы дать параметров). На следующей<br>странице пример функции с функцией в параметрах.</li>
            </ul>
          </article>
        </div>
      </section>
    </main>
    <footer class="status">
      <span>29 ішіндегі 29-слайд</span><span class="lang">қазақ</span>
      <span class="reply">Microsoft корпорациясына жауап қайтару</span>
      <button class="notes"><svg viewBox="0 0 14 14"><path d="M4.500 4L7 1.500 9.500 4M1 6.500h12M1 9.500h12M1 12.500h8"/></svg>Жазбалар</button>
      <button class="vw on" aria-label="Normal"><svg viewBox="0 0 14 14"><path d="M1 1h12v12H1zM3.500 1v12M3.500 10.500H13M6 3.500h5v4H6zM8 5.500h1"/></svg></button>
      <button class="vw" aria-label="Sorter"><svg viewBox="0 0 14 14"><path d="M1 1h4.500v4.500H1zM8.500 1H13v4.500H8.500zM1 8.500h4.500V13H1zM8.500 8.500H13V13H8.500z"/></svg></button>
      <button class="vw" aria-label="Slide show"><svg viewBox="0 0 14 14"><path d="M1 1h12M2.500 1v6.500h9V1M7 7.500V13M4 13h6M5.500 4h3"/></svg></button>
      <button class="vw" aria-label="Zoom out"><svg viewBox="0 0 14 14"><path d="M1.500 7.500h11"/></svg></button>
      <input type="range" min="0" max="100" value="22" aria-label="Zoom">
      <button class="vw" aria-label="Zoom in"><svg viewBox="0 0 14 14"><path d="M1.500 7.500h11M7 2v11"/></svg></button>
      <span class="pct">101%</span>
      <button class="fit" aria-label="Fit"><svg viewBox="0 0 14 14"><path d="M4 4h6v6H4zM7 1v4M7 9v4M1 7h4M9 7h4M5.500 2.500L7 1l1.500 1.500M5.500 11.500L7 13l1.500-1.500M2.500 5.500L1 7l1.500 1.500M11.500 5.500L13 7l-1.500 1.500"/></svg></button>
    </footer>
  </div>
</div>
</body>
</html>
```
FILE: styles.css
```css
* { box-sizing: border-box; }
body { margin: 0; height: 100vh; display: flex; flex-direction: column; overflow: hidden; font-family: Inter, "Noto Sans", sans-serif; font-size: 12px; color: #252423; background: #ecebe9; font-variant-ligatures: none; font-feature-settings: "calt" 0; }
button { font: inherit; color: inherit; background: none; border: 0; padding: 0; margin: 0; display: flex; align-items: center; }
a { color: inherit; text-decoration: none; }
p, h1, h2, h4, ul, ol, pre { margin: 0; padding: 0; list-style: none; font-weight: 400; }
svg { display: block; flex: none; width: 16px; height: 16px; }
.sprite { position: absolute; width: 0; height: 0; }

/* browser */
.browser { background: #454545; color: #dcdcdc; border-bottom: 1px solid #5c5c5c; flex: none; }
.tabstrip { display: flex; height: 43px; padding: 9px 7px 0 9px; align-items: center; background: linear-gradient(#454545 9px, #3c3c3c 9px); }
.tabs { display: flex; flex: 1; min-width: 0; height: 34px; }
.tab { flex: 1; min-width: 0; display: flex; align-items: center; padding: 0 9px 0 11px; position: relative; border-radius: 8px 8px 0 0; background: #393939; }
.tab::after { content: ""; position: absolute; right: 0; top: 7px; height: 20px; width: 1px; background: #727272; }
.tab span { flex: 1; min-width: 0; margin: 0 6px 0 8px; overflow: hidden; white-space: nowrap; -webkit-mask-image: linear-gradient(90deg, #000 60%, transparent); mask-image: linear-gradient(90deg, #000 60%, transparent); }
.tab button svg { width: 10px; height: 10px; }
.tab.active { background: #4b4b4b; color: #fff; }
.tab.active::after, .tab:last-child::after { display: none; }
.round { width: 28px; height: 28px; border-radius: 14px; justify-content: center; margin-left: 8px; background: #373737; flex: none; }
.round svg { width: 14px; height: 14px; }
.round.last { margin-left: 50px; }
.round.last svg { width: 12px; height: 12px; }
.navbar { display: flex; height: 36px; align-items: center; padding: 0 14px; gap: 16px; background: #4a4a4a; }
.omnibox { flex: 1; display: flex; align-items: center; height: 28px; padding: 0 10px; gap: 16px; border-radius: 14px; background: #202124; margin: 0 -2px; }
.url { flex: 1; margin-left: -8px; font-size: 14px; color: #9b9ea2; white-space: nowrap; }
.url b { font-weight: 500; color: #fff; }
.exts { display: flex; align-items: center; gap: 16px; }
.exts .face { width: 22px; height: 22px; margin: 0 -3px; }
.timer { position: relative; width: 16px; height: 20px; }
.timer span { position: absolute; top: 10px; left: -4px; width: 24px; text-align: center; background: #303134; color: #fff; font-size: 10px; line-height: 12px; font-weight: 600; border-radius: 2px; }
.bookmarks { display: flex; align-items: center; height: 32px; padding: 0 20px 0 14px; gap: 16px; white-space: nowrap; }
.bookmarks a { display: flex; align-items: center; gap: 8px; }
.bookmarks .more { margin-left: auto; font-size: 16px; }

/* teams bar */
.teams { display: flex; align-items: center; height: 48px; background: #464a8f; color: #fff; padding: 0 14px 0 25px; flex: none; }
.waffle svg { width: 18px; height: 18px; }
.teams h1 { font-size: 14px; font-weight: 500; margin-left: 45px; width: 340px; }
.search { flex: 1; display: flex; align-items: center; height: 32px; padding: 0 8px; gap: 6px; background: #d9dbe8; border-radius: 4px; }
.search input { border: 0; background: none; outline: 0; padding: 0; font: inherit; font-size: 14px; flex: 1; }
.search input::placeholder { color: #4f5296; opacity: 1; }
.tdots { margin-left: 351px; }
.tdots svg { width: 14px; height: 4px; }
.avatar { position: relative; width: 32px; height: 32px; margin-left: 17px; border-radius: 16px; background: #ecd3e0; color: #62304f; font-size: 14px; font-weight: 500; justify-content: center; }
.avatar svg { position: absolute; right: -1px; bottom: 0; width: 12px; height: 12px; }

.shell { flex: 1; display: flex; min-height: 0; }
.rail { width: 68px; flex: none; display: flex; flex-direction: column; padding-top: 8px; background: linear-gradient(90deg, #ebebeb 60px, #e0e0e0); color: #616161; }
.rail a { display: flex; flex-direction: column; align-items: center; height: 56px; padding-top: 2px; font-size: 11px; line-height: 16px; white-space: nowrap; }
.rail svg { width: 20px; height: 22px; fill: none; stroke: #616161; stroke-width: 1.100; }
.rail .current { color: #5b5fc7; font-style: italic; height: 48px; margin: -4px 0 12px 2px; padding: 6px 4px 0 0; border-left: 2px solid #5b5fc7; }
.rail .dots { padding-top: 9px; height: 50px; }
.rail .help { margin-top: auto; height: 49px; }

/* powerpoint */
.app { flex: 1; min-width: 0; display: flex; flex-direction: column; background: #f3f2f0; }
.ch { width: 10px; height: 10px; }
.titlebar { display: flex; align-items: center; height: 48px; padding-left: 12px; gap: 16px; font-size: 14px; }
.ppt { width: 18px; height: 18px; margin-right: -2px; }
.titlebar button { margin-left: 2px; }
.menubar { display: flex; align-items: flex-start; height: 36px; padding: 0 8px 0 22px; gap: 33px; font-size: 14px; white-space: nowrap; }
.menubar > button { height: 31px; border-bottom: 3px solid transparent; border-top: 3px solid transparent; }
.menubar > .on { font-weight: 600; border-bottom-color: #c43e26; }
.tell { gap: 12px; color: #605e5c; }
.menubar .tell { margin-left: 8px; }
.actions { margin: 4px 0 0 auto; display: flex; gap: 8px; color: #c13c24; }
.actions svg { fill: none; stroke: currentColor; stroke-width: 1.100; }
.box, .pair { height: 28px; min-width: 34px; justify-content: center; border: 1px solid #c8c6c4; border-radius: 2px; background: #fff; gap: 7px; }
.pair { display: flex; width: 66px; gap: 0; }
.pair button { flex: 1; justify-content: center; }
.pair button + button { border-left: 1px solid #c8c6c4; }
.wide { width: 50px; }
.share { height: 28px; width: 100px; justify-content: center; gap: 4px; background: #c13c24; color: #fff; border-radius: 2px; font-weight: 600; }
.share .ch { margin-left: 4px; }
.close { width: 56px; font-weight: 600; }
.ribbon { display: flex; height: 41px; padding-top: 4px; border-bottom: 1px solid #b9b8b7; box-shadow: 0 1px 3px #0003; position: relative; z-index: 1; }
.grp { display: flex; align-items: center; height: 32px; gap: 14px; padding: 0 9px 0 14px; border-right: 1px solid #c8c6c4; }
.grp.first { padding: 0 13px 0 18px; }
.grp button { width: 24px; justify-content: center; gap: 4px; height: 24px; }
.grp svg { width: 20px; height: 20px; stroke: #333; stroke-width: 1.100; }
.grp svg.ch { width: 10px; height: 10px; stroke: none; }
.grp .sp { width: 34px; }
.grp .nar { width: 20px; }
.grp .mid { width: 26px; }
.grp .new { width: auto; font-size: 14px; gap: 6px; white-space: nowrap; }
.new span { margin-left: 4px; }
.dim { color: #a3a3a3; }
.grp .dim svg, .grp svg.dim { stroke: #a9a9a9; }
.grp.font { padding: 0 14px 0 4px; gap: 16px; }
.combos { display: flex; }
select { appearance: none; width: 128px; height: 28px; border: 1px solid #c8c6c4; border-radius: 0; background: #f8f8f8 url("data:image/svg+xml,%3Csvg xmlns='http://www.w3.org/2000/svg' viewBox='0 0 10 10'%3E%3Cpath d='M1 3l4 4 4-4' fill='none' stroke='%23a3a3a3'/%3E%3C/svg%3E") no-repeat right 3px center / 10px; }
select.size { width: 51px; margin-left: -1px; }
.grp .let { font-family: "Open Sans", sans-serif; font-size: 20px; line-height: 24px; color: #a3a3a3; gap: 0; }
.grp .let.sm { font-size: 17px; }
.let sup { line-height: 0; margin-top: -12px; }
.grp .let sup svg { width: 7px; height: 7px; fill: none; stroke: #8fc3ea; stroke-width: 1.500; }
.let.b { font-weight: 700; }
.let.i { font-style: italic; }
.let.u { text-decoration: underline; text-underline-offset: 3px; text-decoration-thickness: 1px; }
.grp.des { padding-right: 14px; }
.grp.md { padding-right: 13px; }
.fold { margin: 10px 5px 0 auto; }

.work { flex: 1; min-height: 0; display: flex; background: #ecebe9; }
.thumbs { width: 255px; flex: none; display: flex; justify-content: space-between; overflow: hidden; border-right: 2px solid #d0d2d4; padding: 0 6px 0 9px; }
.thumbs ol { display: flex; flex-direction: column; justify-content: flex-end; gap: 16px; padding-bottom: 2px; }
.thumbs ol > li { display: flex; gap: 13px; color: #605e5c; font: 15px "Liberation Sans", sans-serif; }
.thumbs ol > li > span { width: 16px; line-height: 6px; }
.thumbs .sel > span { color: #c13c24; }
.frame { width: 180px; height: 103px; flex: none; border: 1px solid #d0ced4; padding: 1px; background: #fff; }
.sel .frame { border-color: #d2472f; outline: 2px solid #d2472f; }
.scroll { display: flex; align-items: flex-end; }
.scroll i { width: 6px; height: 161px; margin-bottom: 6px; border-radius: 3px; background: #757575; }

.mini, .slide { position: relative; background:
  radial-gradient(ellipse 8% 14% at 72% 5%, #2b5d6ac0, transparent),
  radial-gradient(ellipse 8% 14% at 74% 96%, #24586780, transparent),
  radial-gradient(ellipse 20% 40% at 7% 68%, #1f536270, transparent),
  radial-gradient(ellipse 16% 46% at 76% 66%, #21556060, transparent),
  radial-gradient(ellipse 58% 78% at 50% 50%, #457f70 0%, #3b7067 28%, #28595a 56%, #1b4751 78%, #133a48 100%); }
.mini::after, .slide::after { content: ""; position: absolute; top: 0; right: 114px; width: 72px; height: 121px; background: #ac171d; box-shadow: 0 2px 4px #0006; }
.mini::after { right: 15px; width: 10px; height: 17px; }
.mini { width: 176px; height: 99px; overflow: hidden; color: #fff; font: 500 4px/4px Inter, sans-serif; white-space: nowrap; }
.mini h4 { font-size: 8px; line-height: 10px; color: #f0f0f0; }
.mini small, .mini p { font-size: 4px; font-weight: 500; }
.mini ul li { position: relative; margin-bottom: 2px; }
.mini ul li::before, .slide li::before { content: ""; position: absolute; background: #83cfd3; clip-path: polygon(0 0, 100% 50%, 0 100%); }
.mini ul li::before { left: -5px; top: 1px; width: 3px; height: 3px; }
.mini em { font-style: normal; color: #55beb5; text-decoration: underline; }
.code { background: #2b2b2b; color: #a9b7c6; font: 3px/4px "Liberation Mono", monospace; overflow: hidden; padding: 0 2px 0 6px; }
.code i { display: block; font-style: normal; background: #3c3f41; margin: 0 -2px 0 -6px; padding-left: 3px; }
.code b { color: #cc7832; font-weight: 400; }
.code u { color: #ffc66d; text-decoration: none; }
.code.big { font-size: 4px; line-height: 7px; }
.mini .row { display: flex; }
.mini.s24 { padding: 11px 16px 0 6px; }
.s24 ul { padding-left: 6px; height: 18px; }
.s24 .code { height: 35px; }
.mini.s25 { padding: 6px 3px 0 9px; }
.s25 .row { gap: 3px; margin-top: 4px; }
.s25 .code { flex: 1; min-width: 0; height: 57px; padding-left: 3px; }
.s25 .code i { margin-left: -3px; }
.mini.s26 { padding: 6px 24px 0 11px; }
.s26 .row { gap: 10px; margin-top: 7px; }
.s26 .code { width: 65px; height: 45px; }
.mini.s27 { padding: 6px 0 0 11px; }
.s27 ul { padding: 4px 0 0 11px; }
.mini.s28 { padding: 11px 0 0 23px; font-size: 3px; line-height: 3px; }
.s28 ul li + li { margin-top: 5px; }
.mini.s29 { padding: 6px 0 0 17px; }
.s29 ul { padding: 5px 0 0 5px; }
.mini.s29 ul li { margin-bottom: 1px; }

.editor { flex: 1; min-width: 0; padding-bottom: 12px; height: max-content; border-bottom: 2px solid #d0d3d5; }
.hr { margin: 0 142px 8px 159px; height: 20px; background: #fff; box-shadow: 0 1px 3px #0003; }
.hr svg { width: 100%; height: 20px; }
.hr text, .vr text { font: 11px "Liberation Serif", serif; text-anchor: middle; fill: #222; }
.canvas { display: flex; }
.vr { width: 20px; background: #fff; box-shadow: 0 1px 3px #0003; }
.vr svg { width: 20px; height: 100%; }
.slide { flex: 1; aspect-ratio: 16 / 9; margin: 0 142px 0 139px; padding: 54px 0 0 128px; overflow: hidden; color: #fff; outline: 1px solid #b9b9b9; white-space: nowrap; }
.slide h2 { font-size: 57px; line-height: 70px; font-weight: 400; color: #ebebeb; }
.slide ul { padding: 26px 0 0 36px; font-size: 27px; line-height: 27px; }
.slide li { position: relative; margin-bottom: 14px; }
.slide li::before { left: -36px; top: 7px; width: 16px; height: 17px; }
.slide a { color: #55beb5; text-decoration: underline; text-decoration-thickness: 2px; text-underline-offset: 4px; text-decoration-skip-ink: none; }

.status { display: flex; align-items: center; height: 23px; flex: none; padding: 0 25px 0 21px; background: #f3f2f0; color: #605e5c; font-size: 11px; white-space: nowrap; }
.status svg { width: 14px; height: 14px; fill: none; stroke: #444; }
.lang { margin-left: 18px; }
.reply { margin-left: auto; }
.notes { margin: 0 8px 0 14px; gap: 5px; }
.status .notes { margin: 0 8px 0 14px; font-size: 12px; }
.vw { width: 32px; height: 23px; justify-content: center; }
.status .vw { margin-right: 9px; }
.status .vw.on { width: 40px; margin-right: 0; padding-left: 9px; justify-content: flex-start; background: #e0dfdd; }
.status input { appearance: none; width: 94px; height: 15px; margin: 0 6px 0 0; background: linear-gradient(#666, #666) center / 100% 1px no-repeat; }
.status input::-webkit-slider-thumb { appearance: none; width: 6px; height: 15px; background: #605e5c; }
.pct { width: 30px; margin: 0 23px 0 6px; font-size: 12px; }
```
